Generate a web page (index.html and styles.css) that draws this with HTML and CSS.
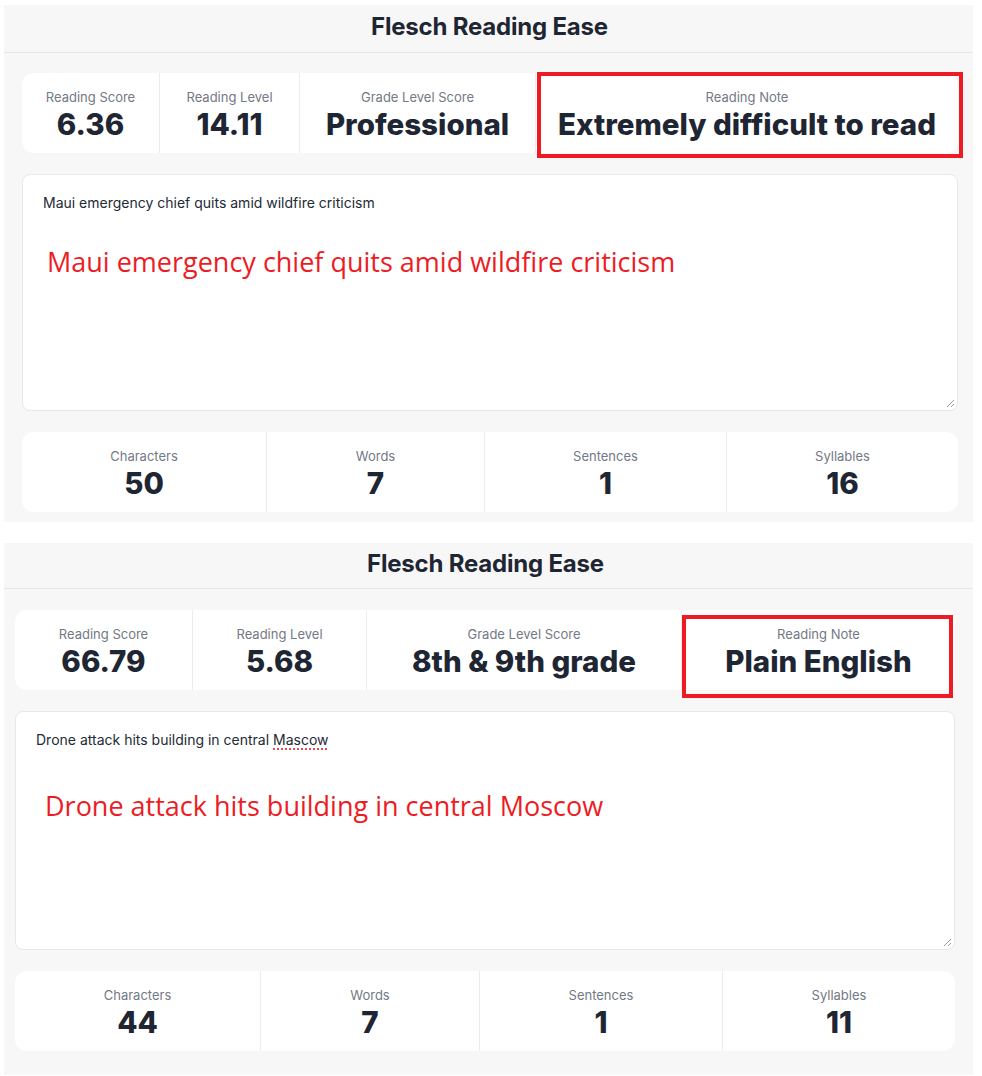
FILE: index.html
```html
<!DOCTYPE html>
<html lang="en">
<head>
<meta charset="utf-8">
<title>Flesch Reading Ease</title>
<link rel="stylesheet" href="styles.css">
</head>
<body>
<section class="panel panel-a">
  <header class="panel-head"><h2>Flesch Reading Ease</h2></header>
  <div class="panel-body">
    <div class="stats stats-top-a">
      <div class="stat"><div class="label">Reading Score</div><div class="value">6.36</div></div>
      <div class="stat"><div class="label">Reading Level</div><div class="value">14.11</div></div>
      <div class="stat"><div class="label">Grade Level Score</div><div class="value">Professional</div></div>
      <div class="stat"><div class="label">Reading Note</div><div class="value">Extremely difficult to read</div></div>
    </div>
    <div class="editor">
      <p class="input-text">Maui emergency chief quits amid wildfire criticism</p>
      <p class="annotation annotation-a">Maui emergency chief quits amid wildfire criticism</p>
      <svg class="grip" width="9" height="9" viewBox="0 0 9 9"><path d="M8 1L1 8M8 5L5 8" stroke="#9a9a9a" stroke-width="1" fill="none"/></svg>
    </div>
    <div class="stats stats-bottom-a">
      <div class="stat"><div class="label">Characters</div><div class="value">50</div></div>
      <div class="stat"><div class="label">Words</div><div class="value">7</div></div>
      <div class="stat"><div class="label">Sentences</div><div class="value">1</div></div>
      <div class="stat"><div class="label">Syllables</div><div class="value">16</div></div>
    </div>
  </div>
  <div class="redbox redbox-a"></div>
</section>

<section class="panel panel-b">
  <header class="panel-head"><h2>Flesch Reading Ease</h2></header>
  <div class="panel-body">
    <div class="stats stats-top-b">
      <div class="stat"><div class="label">Reading Score</div><div class="value">66.79</div></div>
      <div class="stat"><div class="label">Reading Level</div><div class="value">5.68</div></div>
      <div class="stat"><div class="label">Grade Level Score</div><div class="value">8th &amp; 9th grade</div></div>
      <div class="stat"><div class="label">Reading Note</div><div class="value">Plain English</div></div>
    </div>
    <div class="editor">
      <p class="input-text">Drone attack hits building in central <span class="misspelled">Mascow</span></p>
      <p class="annotation annotation-b">Drone attack hits building in central Moscow</p>
      <svg class="grip" width="9" height="9" viewBox="0 0 9 9"><path d="M8 1L1 8M8 5L5 8" stroke="#9a9a9a" stroke-width="1" fill="none"/></svg>
    </div>
    <div class="stats stats-bottom-b">
      <div class="stat"><div class="label">Characters</div><div class="value">44</div></div>
      <div class="stat"><div class="label">Words</div><div class="value">7</div></div>
      <div class="stat"><div class="label">Sentences</div><div class="value">1</div></div>
      <div class="stat"><div class="label">Syllables</div><div class="value">11</div></div>
    </div>
  </div>
  <div class="redbox redbox-b"></div>
</section>
</body>
</html>
```

FILE: styles.css
```css
* { box-sizing: border-box; }
html, body { margin: 0; padding: 0; background: #ffffff; }
body {
  font-family: Inter, "Liberation Sans", sans-serif;
  color: #1f2633;
  width: 982px;
  height: 1076px;
  overflow: hidden;
}
.panel {
  position: relative;
  width: 969px;
  margin-left: 4px;
  background: #f7f7f7;
}
.panel-a { margin-top: 5px; height: 517px; }
.panel-b { margin-top: 21px; height: 532px; }

.panel-head {
  display: flex;
  align-items: center;
  justify-content: center;
  border-bottom: 1px solid #e6e6e6;
}
.panel-a .panel-head { height: 48px; }
.panel-b .panel-head { height: 46px; }
.panel-head h2 {
  margin: 0;
  font-size: 24px;
  font-weight: 700;
  letter-spacing: -0.2px;
  color: #1f2633;
}
.panel-a .panel-head h2 { margin-top: -4px; padding-left: 2px; }
.panel-b .panel-head h2 { margin-top: -4px; padding-right: 6px; }

.panel-body {
  display: flex;
  flex-direction: column;
  gap: 21px;
  padding-top: 20px;
}
.panel-a .panel-body { padding-left: 18px; width: 954px; }
.panel-b .panel-body { padding-left: 11px; padding-top: 21px; width: 951px; }

.stats {
  display: grid;
  height: 80px;
  background: #ffffff;
  border-radius: 12px;
  overflow: hidden;
}
.stats-top-a { grid-template-columns: 137px 140px 236px 1fr; }
.stats-bottom-a { grid-template-columns: 244px 218px 242px 1fr; }
.stats-top-b { grid-template-columns: 177px 174px 315px 1fr; }
.stats-bottom-b { grid-template-columns: 245px 219px 243px 1fr; }

.stat {
  display: flex;
  flex-direction: column;
  align-items: center;
  padding-top: 15px;
  border-left: 1px solid #ececec;
  white-space: nowrap;
}
.stat:first-child { border-left: none; }
.label {
  font-size: 13px;
  line-height: 18px;
  color: #737985;
  font-weight: 400;
}
.value {
  font-size: 29.5px;
  line-height: 36px;
  font-weight: 800;
  color: #1f2633;
}

.editor {
  position: relative;
  background: #ffffff;
  border: 1px solid #e8e8e8;
  border-radius: 8px;
  padding: 19px 20px;
}
.panel-a .editor { height: 237px; }
.panel-b .editor { height: 239px; }
.input-text {
  margin: 0;
  font-size: 14px;
  line-height: 17px;
  color: #232a36;
}
.misspelled {
  text-decoration-line: underline;
  text-decoration-style: dotted;
  text-decoration-color: #e5484d;
  text-decoration-thickness: 1.5px;
  text-underline-offset: 3px;
}
.annotation {
  margin: 0;
  font-family: "Open Sans", "Noto Sans", sans-serif;
  font-size: 27px;
  line-height: 36px;
  color: #ed1c24;
}
.annotation-a { margin-top: 33px; padding-left: 4px; }
.annotation-b { margin-top: 40px; padding-left: 9px; }
.grip {
  position: absolute;
  right: 2px;
  bottom: 2px;
}

.redbox {
  position: absolute;
  border: 4px solid #ed1c24;
}
.redbox-a { left: 533px; top: 67px; width: 426px; height: 86px; }
.redbox-b { left: 678px; top: 72px; width: 271px; height: 83px; }
```
